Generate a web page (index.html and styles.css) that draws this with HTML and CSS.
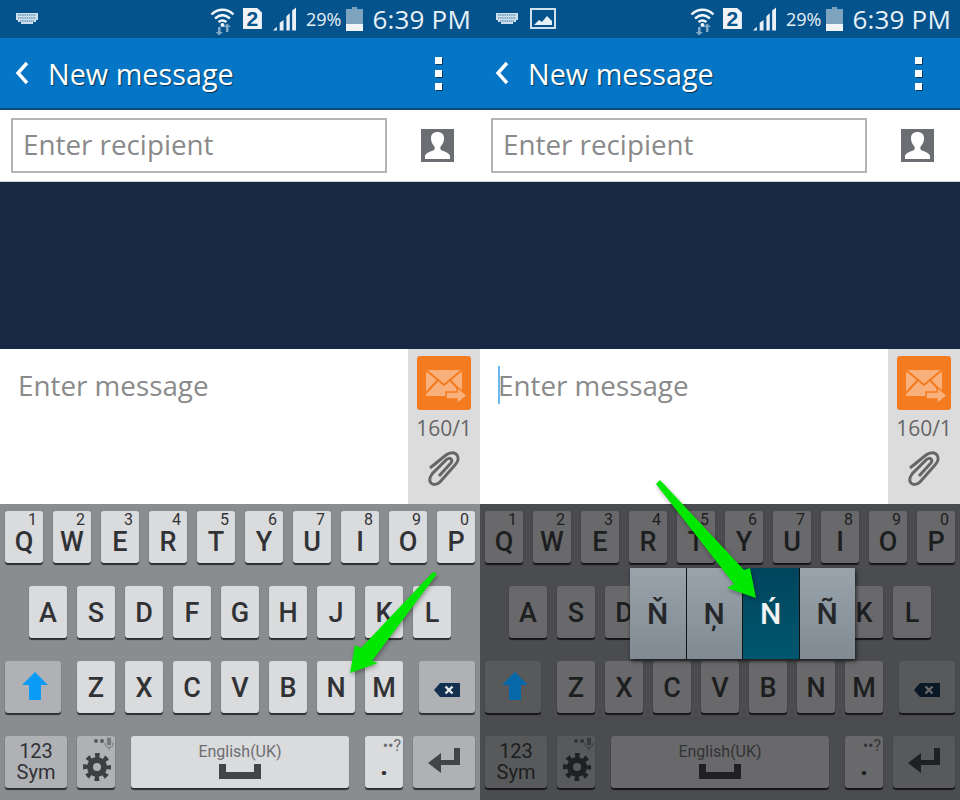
FILE: index.html
```html
<!DOCTYPE html>
<html lang="en">
<head>
    <meta charset="UTF-8">
    <title>New message</title>
    <link rel="stylesheet" href="styles.css">
</head>
<body>
    <svg class="icon-defs" width="0" height="0">
        <defs>
            <symbol id="i-kbd" viewBox="0 0 22 11">
                <path d="M0 0h22v7h-2v2h-3v2H5V9H2V7H0z" fill="#cfe0ec"/>
                <path d="M2 2h18M2 5h18M4 8h14" stroke="#04538c" stroke-width=".8" stroke-dasharray="1.4 .8"/>
            </symbol>
            <symbol id="i-wifi" viewBox="0 0 25 28">
                <path d="M1.500 7.500C8 1.200 17 1.200 23.500 7.500M5 11.500C10 7 15 7 20 11.500M8.500 15C11 13 14 13 16.500 15" fill="none" stroke="#f0f5f9" stroke-width="2.400"/>
                <circle cx="12.500" cy="18" r="2" fill="#f0f5f9"/>
                <path d="M8 20h2.600v5H13l-3.700 3.500L5.600 25H8zM17.200 16.500l3.700 3.500h-2.400v5h-2.600v-5h-2.400z" fill="#7ea8c6"/>
            </symbol>
            <symbol id="i-signal" viewBox="0 0 24 24">
                <path d="M0 24l4-4v4zM7 24v-8l4-3v11zM14 24V9l3.500-3v18zM20 24V3l4-3v24z" fill="#e8f0f6"/>
            </symbol>
            <symbol id="i-battery" viewBox="0 0 17 24">
                <path d="M6 0h5v2h6v22H0V2h6z" fill="#7ea3bf"/>
                <path d="M0 17h17v7H0z" fill="#f0f4f7"/>
            </symbol>
            <symbol id="i-picture" viewBox="0 0 26 21">
                <path d="M1 1h24v19H1z" fill="none" stroke="#cfe0ec" stroke-width="2"/>
                <path d="M4 17l5-5 3 2 5-6 5 5v4z" fill="#e8f0f6"/>
            </symbol>
            <symbol id="i-back" viewBox="0 0 14 24">
                <path d="M12 2L3 12l9 10" fill="none" stroke="#fff" stroke-width="3.400"/>
            </symbol>
            <symbol id="i-contact" viewBox="0 0 33 33">
                <path d="M0 0h33v33H0z" fill="#6a6d72"/>
                <path d="M4 30v-3c0-3 7-5 9-6 1-1 1-3 0-4-2-2-3-5-3-8 0-4 3-6 6.500-6S23 5 23 9c0 3-1 6-3 8-1 1-1 3 0 4 2 1 9 3 9 6v3z" fill="#fff"/>
            </symbol>
            <symbol id="i-send" viewBox="0 0 54 54">
                <path d="M9 14h36v26H9z" fill="#f9b07a"/>
                <path d="M9 14l18 15 18-15M9 37l12-13M45 37L33 24" fill="none" stroke="#f47b20" stroke-width="2"/>
                <path d="M29 36h11v-5l10 8.500L40 48v-5H29z" fill="#f9b07a" stroke="#f47b20" stroke-width="1.500"/>
            </symbol>
            <symbol id="i-clip" viewBox="0 0 32 36">
                <path d="M2 17L18 4c4-3 9-3 11 0s1 7-2 10L12 31c-3 3-7 3-9 1s-1-6 1-9L18 9c2-2 4-2 5-1s1 3-1 5L11 25" fill="none" stroke="currentColor" stroke-width="3"/>
            </symbol>
            <symbol id="i-gear" viewBox="0 0 28 28">
                <circle cx="14" cy="14" r="11.500" fill="none" stroke="currentColor" stroke-width="5" stroke-dasharray="4.500 4.532" stroke-dashoffset="2.250"/>
                <circle cx="14" cy="14" r="7" fill="none" stroke="currentColor" stroke-width="6"/>
            </symbol>
            <symbol id="i-mic" viewBox="0 0 12 15">
                <path d="M3.500 0h5v9h-5z" fill="currentColor"/>
                <path d="M1 6c0 8 10 8 10 0M6 12v3" fill="none" stroke="currentColor" stroke-width="1.200"/>
            </symbol>
            <symbol id="i-backspace" viewBox="0 0 26 14">
                <path d="M6 0h20v14H6L0 7z" fill="currentColor"/>
                <path d="M11.500 3.500l7 7M18.500 3.500l-7 7" stroke="var(--bs-cross)" stroke-width="2.400"/>
            </symbol>
            <symbol id="i-space" viewBox="0 0 42 15">
                <path d="M0 0h7v8h28V0h7v15H0z" fill="currentColor"/>
            </symbol>
            <symbol id="i-enter" viewBox="0 0 32 26">
                <path d="M26 0h6v17H13v8L0 15 13 5v7h13z" fill="currentColor"/>
            </symbol>
            <symbol id="i-shift" viewBox="0 0 26 28">
                <path d="M13 0l13 13h-7v15H7V13H0z" fill="currentColor"/>
            </symbol>
        </defs>
    </svg>

    <div class="screens">
        <!-- left: plain keyboard -->
        <section class="phone">
            <header class="status-bar">
                <svg class="ic-kbd"><use href="#i-kbd"/></svg>
                <div class="status-right">
                    <svg class="ic-wifi"><use href="#i-wifi"/></svg>
                    <span class="sim">2</span>
                    <svg class="ic-signal"><use href="#i-signal"/></svg>
                    <span class="percent">29%</span>
                    <svg class="ic-battery"><use href="#i-battery"/></svg>
                    <span class="clock">6:39 PM</span>
                </div>
            </header>
            <div class="app-bar">
                <svg class="ic-back"><use href="#i-back"/></svg>
                <span class="app-title">New message</span>
                <div class="overflow"><i></i><i></i><i></i></div>
            </div>
            <div class="recipient-row">
                <div class="recipient-input">Enter recipient</div>
                <svg class="ic-contact"><use href="#i-contact"/></svg>
            </div>
            <div class="thread"></div>
            <div class="composer">
                <div class="message-input">Enter message</div>
                <div class="composer-side">
                    <svg class="send-btn"><use href="#i-send"/></svg>
                    <span class="counter">160/1</span>
                    <svg class="ic-clip"><use href="#i-clip"/></svg>
                </div>
            </div>
            <div class="keyboard">
                <div class="kb-row kb-row-1">
                    <div class="key"><sup>1</sup>Q</div><div class="key"><sup>2</sup>W</div><div class="key"><sup>3</sup>E</div><div class="key"><sup>4</sup>R</div><div class="key"><sup>5</sup>T</div><div class="key"><sup>6</sup>Y</div><div class="key"><sup>7</sup>U</div><div class="key"><sup>8</sup>I</div><div class="key"><sup>9</sup>O</div><div class="key"><sup>0</sup>P</div>
                </div>
                <div class="kb-row kb-row-2">
                    <div class="key">A</div><div class="key">S</div><div class="key">D</div><div class="key">F</div><div class="key">G</div><div class="key">H</div><div class="key">J</div><div class="key">K</div><div class="key">L</div>
                </div>
                <div class="kb-row">
                    <div class="key fn key-shift"><svg class="ic-shift"><use href="#i-shift"/></svg></div>
                    <div class="key">Z</div><div class="key">X</div><div class="key">C</div><div class="key">V</div><div class="key">B</div><div class="key">N</div><div class="key">M</div>
                    <div class="key fn key-back"><svg class="ic-backspace"><use href="#i-backspace"/></svg></div>
                </div>
                <div class="kb-row kb-row-4">
                    <div class="key fn key-sym">123<br>Sym</div>
                    <div class="key fn key-gear">
                        <span class="mini-dots"><i></i><i></i></span>
                        <svg class="ic-mic"><use href="#i-mic"/></svg>
                        <svg class="ic-gear"><use href="#i-gear"/></svg>
                    </div>
                    <div class="key key-space">
                        <span class="lang">English(UK)</span>
                        <svg class="ic-space"><use href="#i-space"/></svg>
                    </div>
                    <div class="key key-dot"><span class="dot-extra">••?</span>.</div>
                    <div class="key fn key-enter"><svg class="ic-enter"><use href="#i-enter"/></svg></div>
                </div>
            </div>
            <svg class="arrow" viewBox="0 0 480 800"><path d="M437 574L372 661 378 663 350 673 355 645 361 648 433 572z" fill="#00e800"/></svg>
        </section>

        <!-- right: dimmed keyboard with the accent popup -->
        <section class="phone dim">
            <header class="status-bar">
                <svg class="ic-kbd"><use href="#i-kbd"/></svg>
                <svg class="ic-picture"><use href="#i-picture"/></svg>
                <div class="status-right">
                    <svg class="ic-wifi"><use href="#i-wifi"/></svg>
                    <span class="sim">2</span>
                    <svg class="ic-signal"><use href="#i-signal"/></svg>
                    <span class="percent">29%</span>
                    <svg class="ic-battery"><use href="#i-battery"/></svg>
                    <span class="clock">6:39 PM</span>
                </div>
            </header>
            <div class="app-bar">
                <svg class="ic-back"><use href="#i-back"/></svg>
                <span class="app-title">New message</span>
                <div class="overflow"><i></i><i></i><i></i></div>
            </div>
            <div class="recipient-row">
                <div class="recipient-input">Enter recipient</div>
                <svg class="ic-contact"><use href="#i-contact"/></svg>
            </div>
            <div class="thread"></div>
            <div class="composer">
                <div class="message-input has-caret">Enter message</div>
                <div class="composer-side">
                    <svg class="send-btn"><use href="#i-send"/></svg>
                    <span class="counter">160/1</span>
                    <svg class="ic-clip"><use href="#i-clip"/></svg>
                </div>
            </div>
            <div class="keyboard">
                <div class="kb-row kb-row-1">
                    <div class="key"><sup>1</sup>Q</div><div class="key"><sup>2</sup>W</div><div class="key"><sup>3</sup>E</div><div class="key"><sup>4</sup>R</div><div class="key"><sup>5</sup>T</div><div class="key"><sup>6</sup>Y</div><div class="key"><sup>7</sup>U</div><div class="key"><sup>8</sup>I</div><div class="key"><sup>9</sup>O</div><div class="key"><sup>0</sup>P</div>
                </div>
                <div class="kb-row kb-row-2">
                    <div class="key">A</div><div class="key">S</div><div class="key">D</div><div class="key">F</div><div class="key">G</div><div class="key">H</div><div class="key">J</div><div class="key">K</div><div class="key">L</div>
                </div>
                <div class="kb-row">
                    <div class="key fn key-shift"><svg class="ic-shift"><use href="#i-shift"/></svg></div>
                    <div class="key">Z</div><div class="key">X</div><div class="key">C</div><div class="key">V</div><div class="key">B</div><div class="key">N</div><div class="key">M</div>
                    <div class="key fn key-back"><svg class="ic-backspace"><use href="#i-backspace"/></svg></div>
                </div>
                <div class="kb-row kb-row-4">
                    <div class="key fn key-sym">123<br>Sym</div>
                    <div class="key fn key-gear">
                        <span class="mini-dots"><i></i><i></i></span>
                        <svg class="ic-mic"><use href="#i-mic"/></svg>
                        <svg class="ic-gear"><use href="#i-gear"/></svg>
                    </div>
                    <div class="key key-space">
                        <span class="lang">English(UK)</span>
                        <svg class="ic-space"><use href="#i-space"/></svg>
                    </div>
                    <div class="key key-dot"><span class="dot-extra">••?</span>.</div>
                    <div class="key fn key-enter"><svg class="ic-enter"><use href="#i-enter"/></svg></div>
                </div>
            </div>
            <div class="accent-popup">
                <div class="accent">Ň</div>
                <div class="accent">Ņ</div>
                <div class="accent selected">Ń</div>
                <div class="accent">Ñ</div>
            </div>
            <svg class="arrow" viewBox="0 0 480 800"><path d="M180 480L264 570 270 568 276 598 247 588 254 584 176 484z" fill="#00e800"/></svg>
        </section>
    </div>
</body>
</html>
```

FILE: styles.css
```css
* {
    margin: 0;
    padding: 0;
    box-sizing: border-box;
}

body {
    font-family: Roboto, "Liberation Sans", sans-serif;
    width: 960px;
    height: 800px;
    overflow: hidden;
    background: #fff;
}

.icon-defs {
    position: absolute;
}

.screens {
    display: flex;
}

.phone {
    position: relative;
    width: 480px;
    height: 800px;
    display: flex;
    flex-direction: column;
    --bs-cross: #e8eaec;
}

/* Status bar */
.status-bar {
    height: 38px;
    background: #04538c;
    display: flex;
    align-items: center;
    padding: 0 9px 0 16px;
}

.ic-kbd {
    width: 22px;
    height: 11px;
    margin-top: -1px;
}

.ic-picture {
    width: 26px;
    height: 21px;
    margin-left: 12px;
    margin-top: -1px;
}

.status-right {
    margin-left: auto;
    display: flex;
    align-items: center;
    color: #e8f0f6;
}

.ic-wifi {
    width: 25px;
    height: 28px;
    margin-top: 3px;
}

.sim {
    width: 19px;
    height: 21px;
    margin-left: 8px;
    margin-top: -1px;
    background: #f0f4f7;
    clip-path: polygon(0 0, 75% 0, 100% 22%, 100% 100%, 0 100%);
    color: #04538c;
    font: bold 21px/22px "Liberation Sans", sans-serif;
    text-align: center;
}

.ic-signal {
    width: 23px;
    height: 24px;
    margin-left: 11px;
    margin-top: -1px;
}

.percent {
    margin-left: 10px;
    font-size: 18px;
    font-family: "Open Sans", sans-serif;
}

.ic-battery {
    width: 17px;
    height: 24px;
    margin-left: 5px;
    margin-top: -1px;
}

.clock {
    margin-left: 9px;
    font-size: 26px;
    font-family: "Open Sans", sans-serif;
    letter-spacing: 0.2px;
}

/* App bar */
.app-bar {
    height: 72px;
    background: #0575c5;
    border-bottom: 2px solid #04487c;
    display: flex;
    align-items: center;
    padding: 0 38px 0 15px;
}

.ic-back {
    width: 14px;
    height: 24px;
}

.app-title {
    margin-left: 19px;
    color: #fff;
    font-family: "Open Sans", sans-serif;
    font-size: 28.800px;
    text-shadow: 1px 1px 1px #03385f;
}

.overflow {
    margin-left: auto;
    display: flex;
    flex-direction: column;
    gap: 6px;
}

.overflow i {
    width: 7px;
    height: 7px;
    background: #fff;
    box-shadow: 1px 1px 0 #03385f;
}

/* Recipient */
.recipient-row {
    height: 72px;
    background: #fff;
    border-bottom: 1px solid #cfcfcf;
    display: flex;
    align-items: center;
    padding: 0 26px 0 11px;
    justify-content: space-between;
}

.recipient-input {
    width: 376px;
    height: 55px;
    border: 2px solid #b4b4b4;
    padding-left: 10px;
    color: #8a8a8a;
    font-family: "Open Sans", sans-serif;
    font-size: 27.800px;
    line-height: 49px;
}

.ic-contact {
    width: 33px;
    height: 33px;
}

.thread {
    height: 167px;
    background: #172842;
}

/* Composer */
.composer {
    height: 155px;
    background: #fff;
    display: flex;
}

.message-input {
    flex: 1;
    padding: 17px 0 0 18px;
    color: #8a8a8a;
    font-family: "Open Sans", sans-serif;
    font-size: 27.800px;
    line-height: 38px;
}

.has-caret::before {
    content: "";
    position: absolute;
    left: 18px;
    top: 366px;
    width: 2px;
    height: 38px;
    background: #6ab8f0;
}

.composer-side {
    width: 72px;
    background: #dcdcdc;
    display: flex;
    flex-direction: column;
    align-items: center;
    padding-top: 7px;
    color: #666;
}

.send-btn {
    width: 54px;
    height: 54px;
    background: #f47b20;
    border-radius: 3px;
}

.counter {
    margin-top: 6px;
    font-family: "Open Sans", sans-serif;
    font-size: 21px;
    line-height: 24px;
}

.ic-clip {
    width: 32px;
    height: 36px;
    margin-top: 11px;
}

/* Keyboard */
.keyboard {
    flex: 1;
    background: #8a8d90;
    padding: 7px 5px 0;
    display: flex;
    flex-direction: column;
    gap: 23px;
}

.kb-row {
    display: flex;
    gap: 10px;
}

.kb-row-1 .key {
    line-height: 62px;
}

.kb-row-2 {
    padding-left: 24px;
}

.key {
    position: relative;
    width: 38px;
    height: 52px;
    background: #dadbdd;
    border-radius: 3px;
    box-shadow: 0 2px 1px #2c2d2f;
    color: #313235;
    font-size: 27px;
    font-weight: 500;
    line-height: 54px;
    text-align: center;
}

.key sup {
    position: absolute;
    top: 1px;
    right: 6px;
    font-size: 16px;
    font-weight: 400;
    line-height: 16px;
}

.fn {
    background: #b0b1b5;
}

.key-shift {
    width: 56px;
    margin-right: 6px;
    color: #0a9bf7;
}

.ic-shift {
    width: 26px;
    height: 28px;
    margin-top: 11px;
    margin-left: 3px;
}

.key-back {
    width: 56px;
    margin-left: 6px;
    color: #14304f;
}

.ic-backspace {
    width: 26px;
    height: 14px;
    margin-top: 18px;
}

.key-sym {
    width: 62px;
    font-size: 20px;
    font-weight: 400;
    line-height: 21px;
    padding-top: 5px;
}

.key-gear {
    color: #3e3f42;
}

.mini-dots {
    position: absolute;
    top: 3px;
    left: 17px;
    display: flex;
    gap: 2px;
}

.mini-dots i {
    width: 4px;
    height: 4px;
    border-radius: 50%;
    background: #58595c;
}

.ic-mic {
    position: absolute;
    top: 1px;
    right: 1px;
    width: 10px;
    height: 14px;
    color: #77787b;
}

.ic-gear {
    width: 28px;
    height: 28px;
    margin-top: 17px;
    margin-left: 2px;
}

.key-space {
    width: 218px;
    margin-left: 6px;
    margin-right: 6px;
    color: #434447;
}

.lang {
    display: block;
    color: #6d6e72;
    font-size: 16px;
    font-weight: 400;
    line-height: 20px;
    padding-top: 6px;
}

.ic-space {
    display: block;
    width: 42px;
    height: 15px;
    margin: 2px auto 0;
}

.key-dot {
    font-size: 28px;
    font-weight: 700;
    line-height: 60px;
}

.dot-extra {
    position: absolute;
    top: 2px;
    right: 2px;
    font-size: 16px;
    font-weight: 400;
    line-height: 16px;
    color: #6d6e72;
}

.key-enter {
    width: 62px;
    color: #434447;
}

.ic-enter {
    width: 32px;
    height: 26px;
    margin-top: 12px;
}

/* Overlays */
.arrow {
    position: absolute;
    left: 0;
    top: 0;
    width: 480px;
    height: 800px;
    filter: drop-shadow(1px 2px 2px rgba(0, 0, 0, 0.35));
}

.accent-popup {
    position: absolute;
    left: 150px;
    top: 568px;
    width: 225px;
    height: 91px;
    display: flex;
    background: linear-gradient(#9aa3ab, #7f8a93);
    box-shadow: 1px 2px 4px rgba(0, 0, 0, 0.7);
}

.accent {
    flex: 1;
    border-left: 1px solid #111;
    color: #26272a;
    font-size: 30px;
    font-weight: 500;
    line-height: 92px;
    text-align: center;
}

.accent:first-child {
    border-left: 0;
}

.accent.selected {
    background: linear-gradient(#00455c, #005770);
    color: #f2f2f2;
}

/* Right screen is dimmed behind the popup */
.dim {
    --bs-cross: #69696b;
}

.dim .keyboard {
    background: #4b4c4f;
}

.dim .key {
    background: #69696b;
    color: #1d1e20;
    box-shadow: 0 2px 1px #161618;
}

.dim .fn {
    background: #58595b;
}

.dim .key-shift {
    color: #0568a8;
}

.dim .key-back {
    color: #0a1826;
}

.dim .key-gear,
.dim .key-enter,
.dim .key-space {
    color: #1f2022;
}

.dim .lang,
.dim .dot-extra {
    color: #323336;
}

.dim .mini-dots i {
    background: #323336;
}

.dim .ic-mic {
    color: #3a3b3d;
}
```
